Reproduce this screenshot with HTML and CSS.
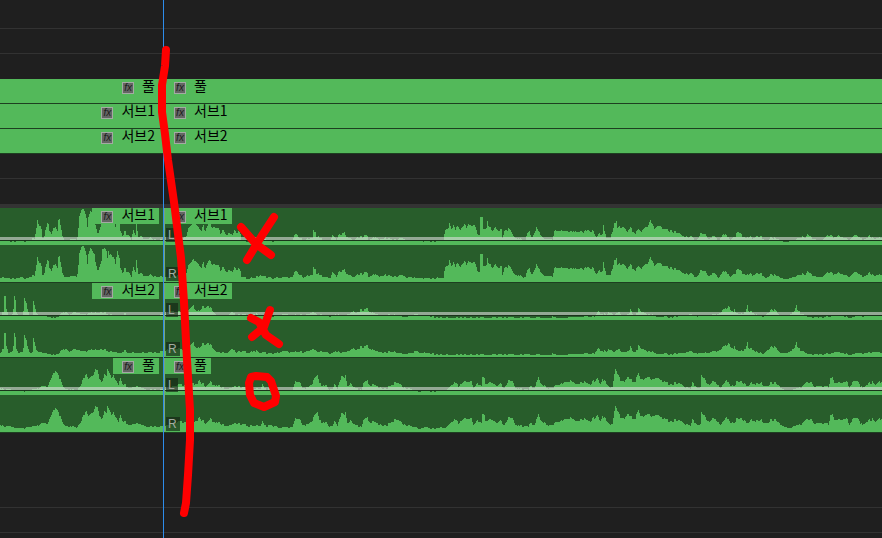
FILE: index.html
```html
<!DOCTYPE html>
<html lang="ko">
<head>
<meta charset="utf-8">
<title>Timeline</title>
<link rel="stylesheet" href="styles.css">
</head>
<body>
<main class="timeline">
  <div class="lane lane-first"></div>
  <div class="lane"></div>
  <div class="lane lane-plain"></div>

  <section class="video">
    <div class="track"><div class="clip clip-out"><span class="label"><i class="fx">fx</i>풀</span></div><div class="clip"><span class="label"><i class="fx">fx</i>풀</span></div></div>
    <div class="track"><div class="clip clip-out"><span class="label"><i class="fx">fx</i>서브1</span></div><div class="clip"><span class="label"><i class="fx">fx</i>서브1</span></div></div>
    <div class="track"><div class="clip clip-out"><span class="label"><i class="fx">fx</i>서브2</span></div><div class="clip"><span class="label"><i class="fx">fx</i>서브2</span></div></div>
  </section>

  <div class="lane"></div>
  <div class="lane lane-plain"></div>
  <div class="divider"></div>

  <section class="audio">
    <div class="track">
      <div class="waves" data-wave="sub1"></div>
      <div class="clip clip-out"><span class="label"><i class="fx">fx</i>서브1</span></div>
      <div class="clip clip-in"><span class="label"><i class="fx">fx</i>서브1</span><span class="channel left">L</span><span class="channel right">R</span></div>
    </div>
    <div class="track">
      <div class="waves" data-wave="sub2"></div>
      <div class="clip clip-out"><span class="label"><i class="fx">fx</i>서브2</span></div>
      <div class="clip clip-in"><span class="label"><i class="fx">fx</i>서브2</span><span class="channel left">L</span><span class="channel right">R</span></div>
    </div>
    <div class="track">
      <div class="waves" data-wave="full"></div>
      <div class="clip clip-out"><span class="label"><i class="fx">fx</i>풀</span></div>
      <div class="clip clip-in"><span class="label"><i class="fx">fx</i>풀</span><span class="channel left">L</span><span class="channel right">R</span></div>
    </div>
  </section>

  <div class="lane lane-tall"></div>
  <div class="lane"></div>

  <div class="playhead"></div>
  <svg class="notes" width="300" height="538" viewBox="0 0 300 538" aria-hidden="true">
    <path d="M166 50 L165 66 L162 85 L162 112 L165 134 L168 160 L174 202 L181 258 L184 302 L187 360 L190 410 L190 440 L188 475 L186 503 L184 513"/>
    <path d="M274 217 L261 237 L247 260 M241 227 L256 244 L271 255"/>
    <path d="M270 310 L264 327 L252 337 M251 318 L259 322 L266 335 L279 344"/>
    <path d="M251 377 L249 383 L250 395 L254 403 L264 407 L275 402 L276 396 L271 381 L267 377 L256 376 Z"/>
  </svg>
</main>
<script src="waves.js"></script>
</body>
</html>
```
FILE: styles.css
```css
* { box-sizing: border-box; }

body {
  margin: 0;
  background: #1f1f1f;
  font-family: "Noto Sans CJK KR", sans-serif;
}

.timeline {
  position: relative;
  min-height: 100vh;
  overflow: hidden;
}

.lane {
  height: 25px;
  border-bottom: 1px solid #323232;
}
.lane-first { height: 29px; }
.lane-tall { height: 75px; }
.lane-plain { border-bottom: 0; }

.divider {
  height: 4px;
  background: #333333;
}

.track {
  position: relative;
  display: grid;
  grid-template-columns: 164px 1fr;
  border-bottom: 1px solid #1d3f20;
}
.video .track {
  height: 25px;
  background: #53b95a;
}
.audio .track {
  height: 75px;
  background: #285d2b;
}

.clip {
  position: relative;
  display: flex;
  align-items: flex-start;
  min-width: 0;
  padding-left: 1px;
}
.clip-out {
  justify-content: flex-end;
  padding-right: 5px;
}
.clip-in { box-shadow: inset 1px 0 #78a77b; }

.label {
  display: flex;
  align-items: flex-start;
  gap: 8px;
  height: 16px;
  padding: 0 4px 0 9px;
  background: #53b95a;
  color: #000000;
  font-size: 14px;
  font-weight: 400;
  line-height: 12px;
  white-space: nowrap;
}

.fx {
  width: 12px;
  height: 12px;
  margin-top: 3px;
  border: 1px solid #a3aaa3;
  background: #646664;
  color: #1d1d1d;
  font: italic 10px/9px "Liberation Sans", sans-serif;
  text-align: center;
}

.waves {
  position: absolute;
  inset: 0;
}
.wave {
  display: block;
  width: 100%;
  height: 37px;
  fill: #53b95a;
}
.waves::after {
  content: "";
  position: absolute;
  top: 29px;
  left: 0;
  right: 0;
  height: 3px;
  border-bottom: 1px solid #1a331b;
  background: rgba(220, 220, 220, 0.6);
}

.channel {
  position: absolute;
  left: 2px;
  padding: 0 3px 0 2px;
  background: rgba(20, 35, 20, 0.65);
  color: #a3aca3;
  font: 12px/14px "Liberation Sans", sans-serif;
}
.left { top: 20px; }
.right { top: 59px; }

.playhead {
  position: absolute;
  top: 0;
  bottom: 0;
  left: 163px;
  width: 1px;
  background: #2d8ceb;
}

.notes {
  position: absolute;
  top: 0;
  left: 0;
  fill: none;
  stroke: #ff0000;
  stroke-width: 8;
  stroke-linecap: round;
  stroke-linejoin: round;
}
```
FILE: waves.js
```js
// Amplitude envelopes as "time:level" pairs, shared by both channels.
const envelopes = {
  sub1: "0:4 8:4 10:3 20:4 27:3 31:5 34:6 35:11 36:16 37:24 38:21 40:18 41:15 42:6 43:6 44:8 45:14 47:22 48:22 49:15 51:11 53:17 55:19 57:15 58:25 59:26 60:18 62:8 64:5 70:5 76:5 77:8 78:16 79:28 80:31 81:34 84:34 86:28 87:19 88:27 90:33 92:31 94:28 95:20 97:13 98:13 100:18 101:21 102:34 104:33 106:30 107:23 108:31 109:27 112:25 114:24 115:19 117:31 119:25 120:15 122:10 124:13 127:11 129:10 131:6 133:14 135:10 136:22 137:14 138:8 141:9 143:6 150:7 155:5 163:5 170:5 186:8 188:16 191:19 193:21 195:22 197:20 199:16 201:14 203:18 205:15 207:20 209:22 211:16 213:18 218:15 220:12 222:14 224:14 226:11 228:12 232:10 234:13 237:12 240:11 241:5 243:4 247:3 252:4 258:5 260:7 262:5 270:4 272:3 278:4 285:4 292:4 294:8 296:10 298:8 300:6 303:5 308:6 312:6 313:13 315:13 316:8 318:9 320:6 322:5 325:5 330:4 332:9 334:7 336:5 338:9 340:11 344:11 346:7 350:6 354:5 358:7 362:7 364:9 366:9 368:6 372:6 376:7 380:5 385:7 390:5 394:5 398:6 402:7 406:4 412:4 416:3 420:4 426:3 434:3 438:4 440:3 443:4 444:11 445:15 447:15 448:17 449:22 451:16 453:21 455:15 458:18 460:13 462:17 464:20 466:17 468:21 471:18 473:21 475:18 477:10 479:10 480:27 482:27 483:15 485:16 486:18 487:25 488:19 490:18 492:13 495:16 498:13 501:15 502:7 504:13 506:16 510:13 513:8 516:7 520:6 525:4 527:10 529:12 531:8 534:12 536:17 538:13 541:9 544:6 552:5 554:13 558:14 562:15 567:14 570:12 575:14 580:13 583:12 588:14 594:12 596:8 600:11 602:11 603:20 604:12 606:7 610:6 612:14 614:22 616:23 617:16 620:17 624:17 627:13 630:16 635:12 638:14 641:12 645:17 648:19 650:25 652:20 654:15 657:18 660:17 664:15 667:14 671:13 675:12 679:10 683:8 688:7 691:9 694:5 698:6 700:11 705:10 708:6 714:8 716:7 718:4 722:9 726:11 729:5 735:9 738:12 741:9 745:6 749:8 752:6 756:8 762:7 766:4 770:7 775:6 780:4 786:3 792:4 798:6 802:8 805:6 807:10 812:7 816:4 824:6 828:9 831:9 833:6 838:9 844:7 848:5 854:9 860:6 864:6 870:9 874:5 882:8",
  sub2: "0:5 3:7 4:25 5:25 6:10 8:4 12:5 13:10 14:25 15:21 16:8 18:4 22:4 23:8 24:23 25:20 27:9 29:4 32:4 33:17 34:15 36:6 38:5 42:4 48:3 52:2 58:3 62:6 65:8 70:5 75:7 82:5 88:6 94:7 103:8 107:5 112:5 120:4 124:6 130:4 140:4 148:5 156:4 163:6 170:9 180:7 187:8 190:11 193:13 196:10 199:9 202:12 205:13 207:15 209:12 213:8 216:4 220:4 228:5 232:8 235:4 242:5 248:4 254:6 260:4 275:3 280:5 288:5 292:4 298:5 305:5 311:6 314:7 318:5 325:5 330:3 336:5 345:4 349:6 353:9 356:6 360:9 363:9 366:11 369:9 373:6 378:5 385:4 392:5 402:3 410:3 415:5 420:4 430:3 440:2 500:2 551:2 552:4 554:2 594:3 595:5 597:8 600:6 606:5 608:7 614:5 618:7 622:4 629:6 630:9 633:5 637:6 638:10 641:7 648:5 652:5 655:3 660:2 664:3 670:2 678:3 687:4 690:6 693:4 700:3 707:4 715:5 720:7 724:11 727:13 730:11 733:8 734:12 736:6 740:5 745:7 747:14 748:9 752:7 757:4 763:3 768:8 772:10 776:8 779:4 786:4 790:6 794:8 796:14 797:9 801:6 806:3 815:2 832:3 836:5 840:4 850:2 866:4 882:4",
  full: "0:8 3:5 8:6 14:4 20:3 27:4 33:5 37:6 42:8 47:8 49:14 51:17 53:22 55:25 57:23 59:16 61:11 63:7 70:5 76:4 80:8 82:13 84:17 86:22 88:15 91:18 93:20 95:26 97:26 99:17 101:13 104:20 106:18 107:25 109:22 111:15 113:20 115:16 118:11 120:18 122:12 124:10 128:8 132:7 136:9 142:7 150:5 160:5 170:8 180:10 190:9 194:11 197:12 199:15 201:11 205:9 210:12 214:9 220:8 228:6 233:8 240:7 248:6 256:6 260:6 262:10 264:6 272:6 278:4 292:4 295:12 299:13 301:8 305:7 312:9 314:17 317:20 319:12 321:8 325:11 328:6 332:5 334:10 337:6 339:12 341:20 344:15 345:18 347:8 350:11 352:9 356:6 361:4 363:12 367:13 370:10 376:9 382:6 388:7 392:10 397:13 401:9 406:6 412:5 418:3 424:4 434:3 440:4 446:4 448:7 451:10 454:13 458:8 461:10 464:13 471:13 473:7 477:11 481:8 482:17 484:17 485:11 490:13 494:9 497:8 500:11 504:6 507:13 512:12 515:7 522:6 528:4 530:9 534:7 536:12 538:17 540:12 544:9 548:6 553:7 555:9 560:11 563:13 570:13 576:11 584:12 590:10 594:14 597:17 599:10 602:16 606:11 610:6 612:8 614:21 615:26 617:20 620:14 624:13 627:18 630:14 635:14 638:20 640:15 643:13 647:18 652:15 658:16 660:13 662:13 667:11 670:9 675:11 680:10 686:7 690:6 692:12 696:8 699:6 700:7 701:19 703:17 706:12 709:10 712:12 716:12 720:7 723:10 726:16 729:10 733:9 736:12 742:12 746:8 751:11 757:10 762:11 766:9 771:12 775:11 780:7 785:5 789:4 797:6 802:8 806:12 812:12 814:7 820:9 825:8 828:7 830:16 832:16 834:11 839:12 846:13 849:8 853:13 858:12 860:7 866:10 872:13 875:9 878:12 882:14"
};

const LENGTH = 882;
const HEIGHT = 37;

function wavePath(text) {
  const points = text.split(" ").map(pair => pair.split(":").map(Number));
  let path = `M0 ${HEIGHT}`;
  let i = 0;
  for (let x = 0; x < LENGTH; x++) {
    while (i < points.length - 2 && points[i + 1][0] <= x) i++;
    const [x0, a] = points[i];
    const [x1, b] = points[i + 1];
    const level = a + (b - a) * (x - x0) / (x1 - x0);
    // Peaks vary a little between neighbouring samples.
    const noise = Math.sin(Math.floor(x / 2) * 12.9898) * 43758.5453;
    const grain = ((noise - Math.floor(noise)) * 2 - 1) * Math.min(1.7, 0.4 + level / 9);
    path += `V${HEIGHT - Math.round(level + 0.4 + grain)}H${x + 1}`;
  }
  return `${path}V${HEIGHT}Z`;
}

document.querySelectorAll(".waves").forEach(element => {
  const svg = `<svg class="wave" viewBox="0 0 ${LENGTH} ${HEIGHT}" preserveAspectRatio="none" shape-rendering="crispEdges" aria-hidden="true"><path d="${wavePath(envelopes[element.dataset.wave])}"/></svg>`;
  element.innerHTML = svg + svg;
});
```
